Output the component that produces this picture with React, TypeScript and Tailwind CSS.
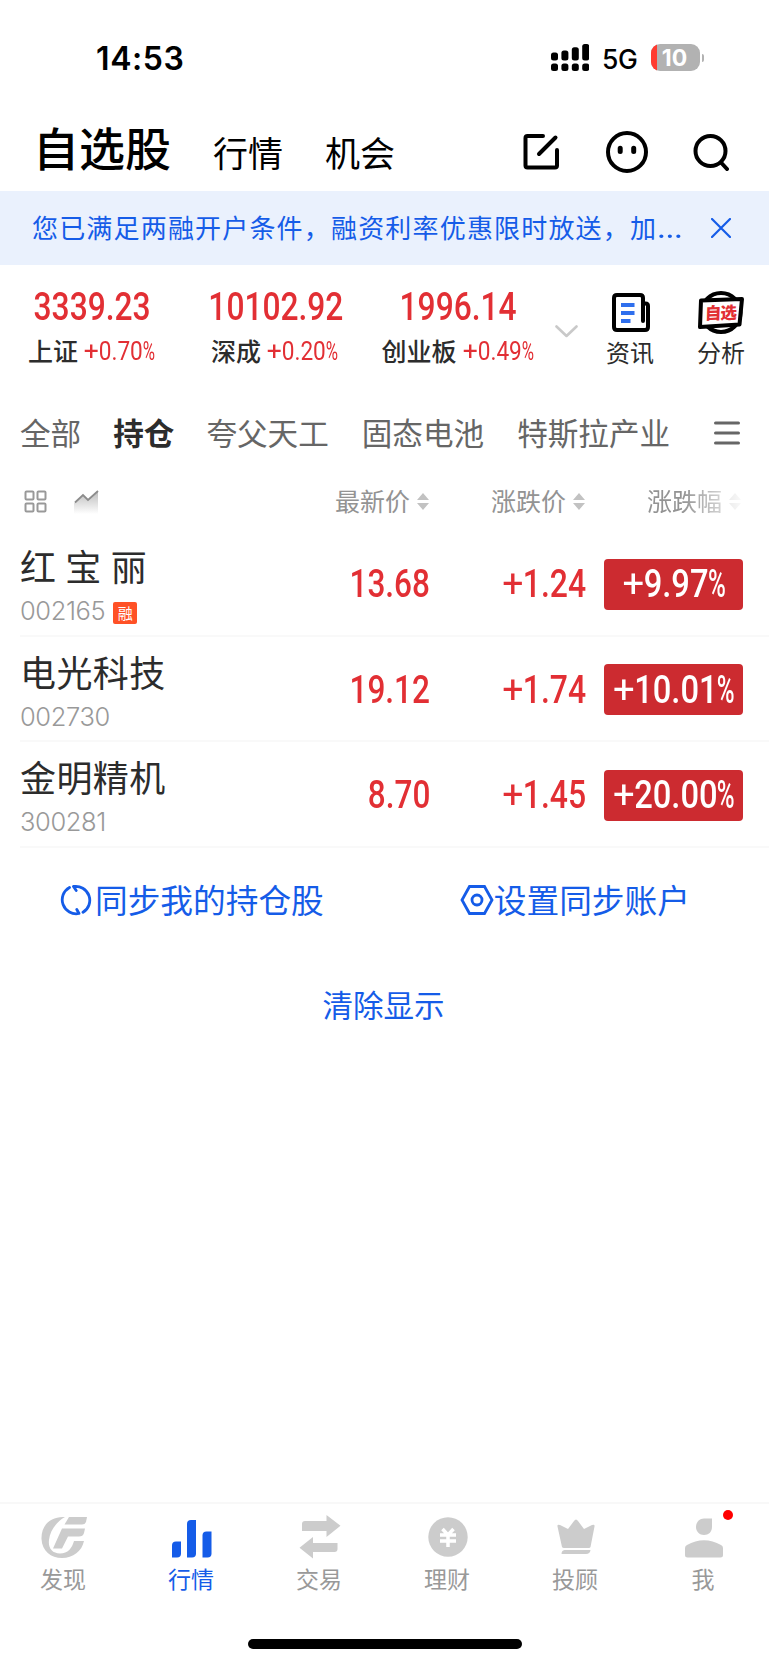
import type { ReactNode } from "react";

const stocks = [
	{ name: "红 宝 丽", code: "002165", margin: true, price: "13.68", change: "+1.24", percent: "+9.97%" },
	{ name: "电光科技", code: "002730", margin: false, price: "19.12", change: "+1.74", percent: "+10.01%" },
	{ name: "金明精机", code: "300281", margin: false, price: "8.70", change: "+1.45", percent: "+20.00%" },
];

const indices = [
	{ name: "上证", value: "3339.23", percent: "+0.70%" },
	{ name: "深成", value: "10102.92", percent: "+0.20%" },
	{ name: "创业板", value: "1996.14", percent: "+0.49%" },
];

// Condensed figures with a wide, light plus and a narrow percent sign
function Figure({ value, className }: { value: string; className: string }) {
	const signed = value.startsWith("+");
	const percent = value.endsWith("%");
	const digits = value.replace("+", "").replace("%", "");

	return (
		<span className={`inline-block whitespace-nowrap ${className}`}>
			{signed && <span className="mx-[0.042em] inline-block scale-x-[1.17] font-normal">+</span>}
			{digits}
			{percent && <span className="-mx-[0.113em] inline-block scale-x-[0.74]">%</span>}
		</span>
	);
}

function StatusBar() {
	return (
		<div className="flex h-[115px] items-center justify-between pl-[96px] pr-[65px] font-['Inter',sans-serif]">
			<div className="mt-[2px] text-[32px] font-semibold leading-none tracking-[0.6px]">14:53</div>
			<div className="flex items-center">
				<svg className="-ml-px" width="38" height="27" viewBox="0 0 38 27">
					<rect x="0" y="8.5" width="7" height="8" rx="2.5" />
					<rect x="10.4" y="6.5" width="7" height="10" rx="2.5" />
					<rect x="20.8" y="3.3" width="7" height="13.2" rx="2.5" />
					<rect x="31.2" y="0" width="7" height="16.5" rx="2.5" />
					<rect x="0" y="19.5" width="7" height="7.5" rx="2.5" />
					<rect x="10.4" y="19.5" width="7" height="7.5" rx="2.5" />
					<rect x="20.8" y="19.5" width="7" height="7.5" rx="2.5" />
					<rect x="31.2" y="19.5" width="7" height="7.5" rx="2.5" />
				</svg>
				<span className="ml-[13px] mt-[3px] w-[37px] text-[26.5px] font-medium leading-none tracking-[-0.3px]">5G</span>
				<div className="relative ml-3 flex h-[27px] w-[49px] items-center justify-center overflow-hidden rounded-[9px] bg-[#b2b2b2]">
					<div className="absolute left-0 top-0 h-full w-[5.5px] bg-[#ff3b30]" />
					<span className="-ml-[2px] mt-px text-[23px] font-bold leading-none text-white">10</span>
				</div>
				<div className="ml-[1.5px] h-[8px] w-[2.5px] rounded-r-full bg-[#b2b2b2]" />
			</div>
		</div>
	);
}

function Header() {
	return (
		<header className="flex h-[76px] items-center pl-[33px] pr-[40px] text-black">
			<h1 className="h-[76px] text-[46px] font-medium leading-[63px]">自选股</h1>
			<span className="ml-[42px] h-[76px] text-[35px] leading-[73px]">行情</span>
			<span className="ml-[42px] h-[76px] text-[35px] leading-[73px]">机会</span>
			<div className="-mt-[2px] ml-auto flex items-center">
				<svg width="36" height="36" viewBox="0 0 36 36" fill="none" stroke="currentColor" strokeWidth="4" strokeLinecap="round" strokeLinejoin="round">
					<path d="M20 2H4.500Q2.500 2 2.500 4V31.500Q2.500 33.500 4.500 33.500H32Q34 33.500 34 31.500V16M32.500 3.500L16 20" />
				</svg>
				<svg className="ml-[47px]" width="42" height="42" viewBox="0 0 42 42" fill="none" stroke="currentColor" strokeWidth="4">
					<circle cx="21" cy="21" r="19" />
					<path d="M14.200 17.300V20.500M27.700 17.300V20.500" strokeWidth="5" strokeLinecap="round" />
				</svg>
				<svg className="ml-[45px]" width="36" height="38" viewBox="0 0 36 38" fill="none" stroke="currentColor" strokeWidth="4">
					<circle cx="17.500" cy="18" r="15" />
					<path d="M28 29.500L34 36" strokeLinecap="round" />
				</svg>
			</div>
		</header>
	);
}

function Notice() {
	return (
		<div className="flex h-[74px] items-center bg-[#eaf1fd] pl-[32px] pr-[38px] text-[#155ce8]">
			<p className="-mt-px w-[665px] whitespace-nowrap text-[26px] leading-none tracking-[1.18px]">
				您已满足两融开户条件，融资利率优惠限时放送，加
				<span className="inline-block origin-left scale-x-[1.25] font-['Noto_Sans']">…</span>
			</p>
			<svg className="ml-auto" width="20" height="20" viewBox="0 0 20 20" fill="none" stroke="currentColor" strokeWidth="2.2" strokeLinecap="round">
				<path d="M1 1L19 19M19 1L1 19" />
			</svg>
		</div>
	);
}

function Indices() {
	return (
		<section className="flex h-[125px]">
			{indices.map((item) => (
				<div key={item.name} className="flex w-[183px] flex-col items-center">
					<div className="ml-[2px] mt-[23px] h-[38px] font-['Roboto'] text-[38px] font-medium leading-[38px] text-[#e22f34]">
						<Figure value={item.value} className="origin-center scale-x-[0.835]" />
					</div>
					<div className="mt-[10px] flex h-[28px] items-center whitespace-nowrap">
						<span className="text-[25px] font-medium leading-[28px] text-[#2c2c2c]">{item.name}</span>
						<span className="ml-[6px] mt-[2px] w-[71px] font-['Roboto'] text-[26px] leading-[28px] text-[#e22f34]">
							<Figure value={item.percent} className="origin-left scale-x-[0.87]" />
						</span>
					</div>
				</div>
			))}
			<svg className="ml-[6px] mt-[60px]" width="23" height="13" viewBox="0 0 23 13" fill="none" stroke="#c9c9c9" strokeWidth="2.6" strokeLinecap="round" strokeLinejoin="round">
				<path d="M1.500 1.500L11.500 11L21.500 1.500" />
			</svg>
			<div className="ml-[28px] flex w-[48px] flex-col items-center">
				<svg className="ml-px mt-[28px]" width="38" height="40" viewBox="0 0 38 40" fill="none" stroke="#000" strokeWidth="4" strokeLinejoin="round">
					<path d="M31 28V5Q31 2 28 2H5Q2 2 2 5V34Q2 37 5 37H33Q36 37 36 34V13Q36 10.500 33.500 10.500H31" strokeLinecap="round" />
					<path d="M9 12H22.500M9 20H22.500M9 28H18.500" stroke="#2f6fed" />
				</svg>
				<span className="mt-[2px] text-[24px] leading-[34px] text-[#2c2c2c]">资讯</span>
			</div>
			<div className="ml-[43px] flex w-[48px] flex-col items-center">
				<svg className="mt-[25px]" width="48" height="46" viewBox="0 0 48 46">
					<circle cx="24" cy="22.500" r="19.500" fill="#fff" stroke="#000" strokeWidth="4" />
					<path d="M4 10.500L45 9L42.500 34.500L3 37Z" fill="#fff" stroke="#000" strokeWidth="4" strokeLinejoin="round" />
					<text x="9.500" y="29" transform="rotate(-2 24 23) skewX(-4)" fontSize="16.500" fontWeight="900" fill="#e22f34" fontFamily="Noto Sans CJK SC, sans-serif" textLength="32">自选</text>
				</svg>
				<span className="-mt-px text-[24px] leading-[34px] text-[#2c2c2c]">分析</span>
			</div>
		</section>
	);
}

function Groups() {
	return (
		<nav className="flex h-[86px] items-center pl-[20px] pr-[29px] text-[30.600px] leading-none text-[#666]">
			<span className="-mt-[2px]">全部</span>
			<span className="-mt-[2px] ml-[32px] font-bold text-[#2c2c2c]">持仓</span>
			<span className="-mt-[2px] ml-[32px]">夸父天工</span>
			<span className="-mt-[2px] ml-[33px]">固态电池</span>
			<span className="-mt-[2px] ml-[33px]">特斯拉产业</span>
			<svg className="ml-auto" width="26" height="24" viewBox="0 0 26 24" stroke="#666" strokeWidth="3" strokeLinecap="round">
				<path d="M1.500 2H24.500M1.500 12H24.500M1.500 22H24.500" />
			</svg>
		</nav>
	);
}

function SortArrows() {
	return (
		<svg className="ml-[7px]" width="12" height="17" viewBox="0 0 12 17" fill="#c2c2c2">
			<path d="M6 0L12 7H0ZM0 10H12L6 17Z" />
		</svg>
	);
}

function TableHead() {
	return (
		<div className="flex h-[54px] items-center pb-[3px] pl-[24px] text-[25px] leading-none text-[#939393]">
			<svg width="23" height="23" viewBox="0 0 23 23" fill="none" stroke="#999" strokeWidth="2">
				<rect x="1.500" y="1.500" width="8" height="8" rx="1" />
				<rect x="13.500" y="1.500" width="8" height="8" rx="1" />
				<rect x="1.500" y="13.500" width="8" height="8" rx="1" />
				<rect x="13.500" y="13.500" width="8" height="8" rx="1" />
			</svg>
			<svg className="ml-[27px]" width="25" height="24" viewBox="0 0 25 24" fill="none">
				<defs>
					<linearGradient id="trend" x1="0" y1="0" x2="0" y2="1">
						<stop offset="0" stopColor="#bbb" />
						<stop offset="1" stopColor="#fff" />
					</linearGradient>
				</defs>
				<path d="M0 13L9 5L14 10L24 1V24H0Z" fill="url(#trend)" />
				<path d="M1 12.500L9 5L14 10L24 1" stroke="#8c8c8c" strokeWidth="1.800" />
			</svg>
			<div className="flex w-[330px] items-center justify-end"><span className="-mt-[2px]">最新价</span><SortArrows /></div>
			<div className="flex w-[156px] items-center justify-end"><span className="-mt-[2px]">涨跌价</span><SortArrows /></div>
			<div className="flex w-[156px] items-center justify-end [mask-image:linear-gradient(to_right,#000_62%,transparent_105%)]"><span className="-mt-[2px]">涨跌幅</span><SortArrows /></div>
		</div>
	);
}

function StockRow({ stock }: { stock: (typeof stocks)[number] }) {
	return (
		<div className="ml-[20px] flex h-[105.500px] items-center border-b-2 border-[#f9f9f9] pt-[3px] font-['Roboto'] text-[38px] font-medium leading-none text-[#e22f34]">
			<div className="flex w-[260px] flex-col self-start font-['Noto_Sans_CJK_SC'] font-normal">
				<span className="mt-[8px] whitespace-pre text-[36px] leading-[46px] tracking-[0.4px] text-[#2c2c2c] [word-spacing:0.5px]">{stock.name}</span>
				<div className="mt-[7px] flex h-[32px] items-center">
					<span className="font-['Inter'] text-[25.500px] font-light leading-none tracking-[-0.4px] text-[#999]">{stock.code}</span>
					{stock.margin && (
						<span className="ml-[8px] mt-[3px] flex h-[22px] w-[24px] items-center justify-center rounded-[2px] bg-[#ff5126] pb-px text-[15px] leading-none text-white">融</span>
					)}
				</div>
			</div>
			<div className="w-[150px] text-right">
				<Figure value={stock.price} className="origin-right scale-x-[0.83]" />
			</div>
			<div className="w-[156px] text-right">
				<Figure value={stock.change} className="origin-right scale-x-[0.84]" />
			</div>
			<div className="ml-[18px] flex h-[51px] w-[139px] items-center justify-center rounded-[4px] bg-[#cc2b30] text-white">
				<Figure value={stock.percent} className="origin-center scale-x-[0.86]" />
			</div>
		</div>
	);
}

function Actions() {
	return (
		<>
			<div className="flex h-[106px] items-center pb-px pl-[60px] text-[32.700px] leading-none text-[#155ce8]">
				<svg width="32" height="32" viewBox="0 0 32 32" fill="none" stroke="currentColor" strokeWidth="2.800" strokeLinecap="round" strokeLinejoin="round">
					<path d="M9.500 3.500A14 14 0 0 0 19 29.500L16.800 25.500M13.500 2.500L16.200 6.500M13.500 2.500A14 14 0 0 1 23 28.300" />
				</svg>
				<span className="-mt-px ml-[3px]">同步我的持仓股</span>
				<svg className="ml-[136px]" width="34" height="32" viewBox="0 0 34 32" fill="none" stroke="currentColor" strokeWidth="2.800">
					<path d="M9.500 2.500H24.500L32 16L24.500 29.500H9.500L2 16Z" />
					<circle cx="17" cy="16" r="5" />
				</svg>
				<span className="-mt-px">设置同步账户</span>
			</div>
			<div className="flex h-[102px] items-center justify-center pr-[2px] text-[30.500px] leading-none text-[#155ce8]">清除显示</div>
		</>
	);
}

function TabItem({ label, active, children }: { label: string; active?: boolean; children: ReactNode }) {
	return (
		<div className={active ? "flex w-[128px] flex-col items-center text-[#155ce8]" : "flex w-[128px] flex-col items-center text-[#999]"}>
			<div className="ml-px mt-[11px] h-[46px]">{children}</div>
			<span className="text-[23px] leading-[34px]">{label}</span>
		</div>
	);
}

function TabBar() {
	return (
		<nav className="-ml-px mt-auto flex h-[137px] border-t-2 border-[#f8f8f8]">
			<TabItem label="发现">
				<svg width="48" height="46" viewBox="0 0 48 46" fill="#ccc">
					<path d="M25 2C10 1 1 11 1.500 24C2 36 11 43 22 43C33 43 42 36 44 26H34C32 33 28 38.500 20 38.500C12 38.500 8 33 9 25C10 16 16 7 25 2Z" />
					<path d="M29 2H47L46 7Q45 9.500 42 9.500H24.500Z" />
					<path d="M22 13.500H45L44 18Q43 21.500 39 21.500H28L22 33.500H13Z" />
				</svg>
			</TabItem>
			<TabItem label="行情" active>
				<svg width="40" height="46" viewBox="0 0 40 46" fill="currentColor">
					<path d="M0 42.500V30.500Q0 26.500 4 26.500H9V38.500Q9 42.500 5 42.500Z" />
					<path d="M15 42.500V9Q15 5 19 5H24V38.500Q24 42.500 20 42.500Z" />
					<path d="M30.500 42.500V20.500Q30.500 16.500 34.500 16.500H39.500V38.500Q39.500 42.500 35.500 42.500Z" />
				</svg>
			</TabItem>
			<TabItem label="交易">
				<svg width="42" height="46" viewBox="0 0 42 46" fill="#ccc">
					<path d="M3 16V9Q3 6 6 6H27.500V0L41.500 10.800L27.500 22V16Z" />
					<path d="M14 28H38.500V34Q38.500 37 35.500 37H14V43.500L0.500 32.800L14 22Z" />
				</svg>
			</TabItem>
			<TabItem label="理财">
				<svg width="40" height="46" viewBox="0 0 40 46">
					<circle cx="20" cy="22" r="19.700" fill="#ccc" />
					<path d="M14.500 14L20 20L25.500 14M12 20H28M12 26H28M20 19V32" fill="none" stroke="#fff" strokeWidth="3.500" />
				</svg>
			</TabItem>
			<TabItem label="投顾">
				<svg width="38" height="46" viewBox="0 0 38 46" fill="#ccc">
					<path d="M5 32L0.500 11.500Q0 9 3 10L11 14L17 6Q19 3 21 6L27 14L35 10Q38 9 37.500 11.500L33.500 32Q33 33 32 33H7Q5.500 33 5 32Z" />
					<path d="M7.500 35H33.500Q33 39 29 39H4.500Q4.500 35.500 7.500 35Z" />
				</svg>
			</TabItem>
			<TabItem label="我">
				<div className="relative">
					<svg width="38" height="46" viewBox="0 0 38 46" fill="#ccc">
						<path d="M19 3.500H27V12C27 17 23.500 20 19 20C14.500 20 11 16.500 11 12C11 7 14.500 3.500 19 3.500Z" />
						<path d="M0 33Q0 31 2 30C13 23.500 25 23.500 36 30Q38 31 38 33V40Q38 42.500 35.500 42.500H2.500Q0 42.500 0 40Z" />
					</svg>
					<div className="absolute -right-[10px] -top-[5px] h-[10px] w-[10px] rounded-full bg-[#ff0000]" />
				</div>
			</TabItem>
		</nav>
	);
}

export default function App() {
	return (
		<main className="flex h-[1665px] w-[769px] flex-col overflow-hidden bg-white font-['Noto_Sans_CJK_SC',sans-serif] text-black">
			<StatusBar />
			<Header />
			<Notice />
			<Indices />
			<Groups />
			<TableHead />
			<div className="mt-[1px]">
				{stocks.map((stock) => (
					<StockRow key={stock.code} stock={stock} />
				))}
			</div>
			<Actions />
			<TabBar />
			<div className="mb-[16px] ml-[247.500px] h-[10px] w-[274px] rounded-full bg-black" />
		</main>
	);
}
